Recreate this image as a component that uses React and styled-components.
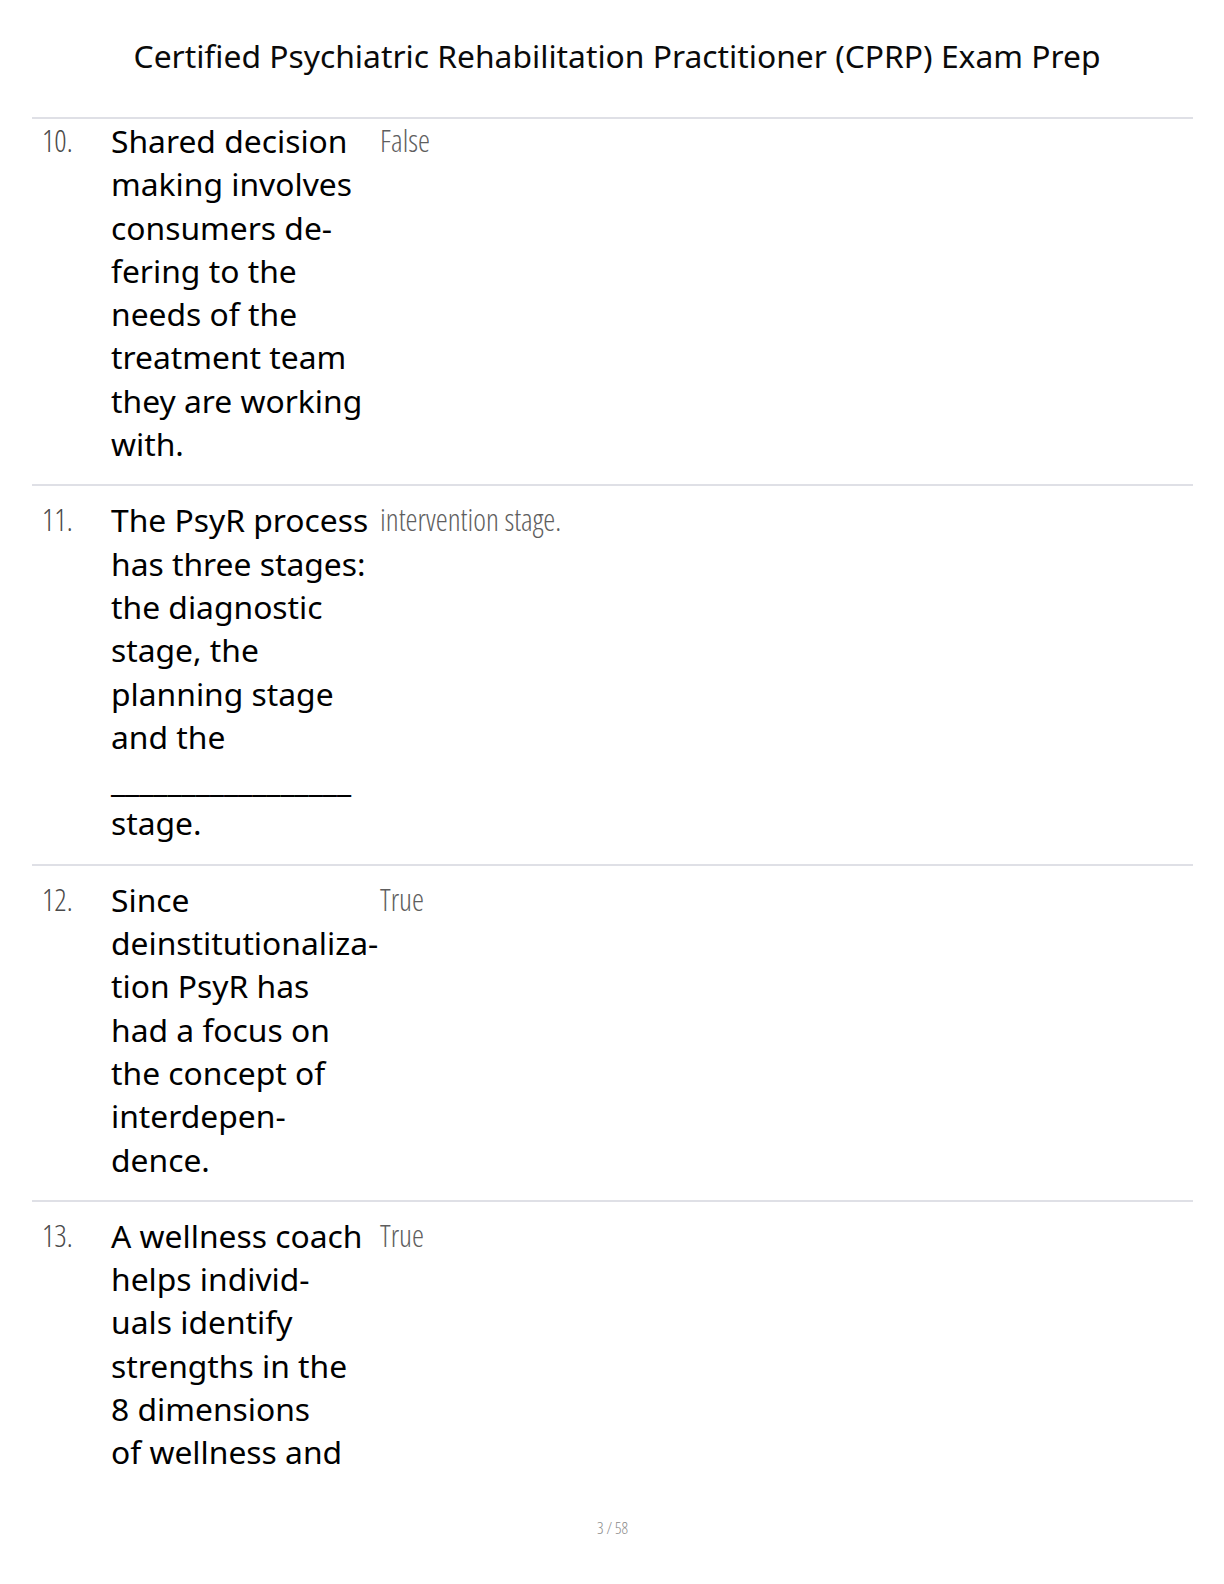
import React from "react";
import styled, { createGlobalStyle } from "styled-components";

const Global = createGlobalStyle`
  html, body { margin: 0; padding: 0; background: #fff; }
  body { font-family: "Noto Sans", "Open Sans", sans-serif; color: #000; }
`;

const Page = styled.div`
  width: 1224px;
  height: 1584px;
  display: flex;
  flex-direction: column;
  box-sizing: border-box;
  padding: 0 31px 0 32px;
  overflow: hidden;
`;

const Header = styled.header`
  height: 117px;
  display: flex;
  align-items: flex-start;
  justify-content: center;
  padding: 34px 0 0 9px;
  box-sizing: border-box;
`;

const Title = styled.h1`
  margin: 0;
  font-family: "Noto Sans", "Open Sans", sans-serif;
  font-weight: 400;
  font-size: 31.8px;
  line-height: 44px;
  color: #0a0a0a;
`;

const List = styled.div`
  border-top: 2px solid #dfe0e6;
  display: flex;
  flex-direction: column;
`;

const Row = styled.div`
  display: grid;
  grid-template-columns: 69px 269px 1fr;
  padding: ${(p) => (p.$first ? "0" : "12px")} 0 ${(p) => (p.$last ? "0" : "19px")} 10px;
  border-bottom: ${(p) => (p.$last ? "none" : "2px solid #dfe0e6")};
`;

const Thin = styled.div`
  font-family: "Open Sans", sans-serif;
  font-weight: 300;
  font-stretch: 75%;
  font-size: 30.3px;
  line-height: 43.3px;
`;

const Num = styled(Thin)`
  color: #4a4a4a;
`;

const Answer = styled(Thin)`
  color: #5e5e5e;
`;

const Question = styled.div`
  font-family: "Noto Sans", "Open Sans", sans-serif;
  font-size: 31.8px;
  line-height: 43.3px;
  color: #000;
`;

const Line = styled.span`
  display: block;
  white-space: nowrap;
  min-height: 43.3px;
`;

const Underscores = styled(Line)`
  margin-top: -43.3px;
`;

const Footer = styled.footer`
  margin-top: auto;
  padding-bottom: 46px;
  text-align: center;
  font-family: "Open Sans", sans-serif;
  font-weight: 300;
  font-stretch: 75%;
  font-size: 16px;
  line-height: 20px;
  color: #8a8a8a;
`;

const rows = [
  {
    n: "10.",
    q: ["Shared decision", "making involves", "consumers de-", "fering to the", "needs of the", "treatment team", "they are working", "with."],
    a: "False",
  },
  {
    n: "11.",
    q: ["The PsyR process", "has three stages:", "the diagnostic", "stage, the", "planning stage", "and the", "", "_________________", "stage."],
    a: "intervention stage.",
  },
  {
    n: "12.",
    q: ["Since", "deinstitutionaliza-", "tion PsyR has", "had a focus on", "the concept of", "interdepen-", "dence."],
    a: "True",
  },
  {
    n: "13.",
    q: ["A wellness coach", "helps individ-", "uals identify", "strengths in the", "8 dimensions", "of wellness and"],
    a: "True",
  },
];

export default function App() {
  return (
    <>
      <Global />
      <Page>
        <Header>
          <Title>Certified Psychiatric Rehabilitation Practitioner (CPRP) Exam Prep</Title>
        </Header>
        <List>
          {rows.map((r, i) => (
            <Row key={r.n} $first={i === 0} $last={i === rows.length - 1}>
              <Num>{r.n}</Num>
              <Question>
                {r.q.map((l, j) =>
                  l.startsWith("_") ? (
                    <Underscores key={j}>{l}</Underscores>
                  ) : (
                    <Line key={j}>{l}</Line>
                  )
                )}
              </Question>
              <Answer>{r.a}</Answer>
            </Row>
          ))}
        </List>
        <Footer>3 / 58</Footer>
      </Page>
    </>
  );
}
